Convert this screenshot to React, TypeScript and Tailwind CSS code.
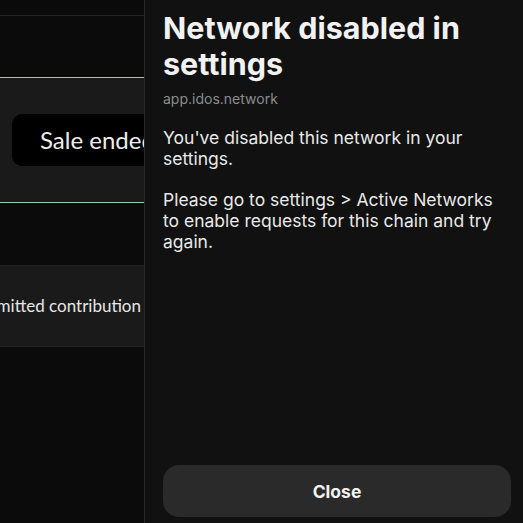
export default function App() {
  return (
    <div className="flex h-[523px] w-[523px] overflow-hidden bg-[#0b0b0b]">
      <SaleBackdrop />
      <NetworkSheet />
    </div>
  );
}

function SaleBackdrop() {
  return (
    <div
      className="flex w-[145px] shrink-0 flex-col overflow-hidden border-r border-[#2a2a2a] bg-[#0b0b0b]"
      style={{ fontFamily: "Lato, 'Open Sans', sans-serif" }}
    >
      <div className="h-[16px] border-b border-[#1d2530] bg-[#0a0a0b]" />
      <div className="h-[62px] border-b border-[#8ccfb2]" />
      <div className="flex h-[125px] items-center border-b border-[#8ccfb2] bg-[#1a1a1a] pl-[12px]">
        <div className="flex h-[52px] w-[200px] shrink-0 items-center rounded-[10px] bg-black pl-[28px] text-[24px] whitespace-nowrap text-[#ececec]">
          Sale ended
        </div>
      </div>
      <div className="h-[63px] border-b border-[#222]" />
      <div className="flex h-[81px] items-center justify-end border-b border-[#222] bg-[#1a1a1a] pr-[3px]">
        <span className="text-[17px] whitespace-nowrap text-[#e6e6e6]">Submitted contribution</span>
      </div>
      <div className="flex-1" />
    </div>
  );
}

function NetworkSheet() {
  return (
    <div
      className="flex flex-1 flex-col bg-[#111111] pt-[10px] pr-[12px] pb-[6px] pl-[18px]"
      style={{ fontFamily: "Inter, 'Liberation Sans', sans-serif" }}
    >
      <h1 className="text-[30.5px] leading-[36px] font-bold text-[#f2f2f2]">Network disabled in settings</h1>
      <p className="mt-[8px] text-[14px] leading-[18px] text-[#8c8c8c]">app.idos.network</p>
      <div className="mt-[19px] flex flex-col gap-[20px] text-[17.5px] leading-[21px] text-[#e8e8e8]">
        <p>You've disabled this network in your settings.</p>
        <p>Please go to settings &gt; Active Networks to enable requests for this chain and try again.</p>
      </div>
      <div className="flex-1" />
      <button className="h-[52px] w-full rounded-[16px] bg-[#2a2a2a] pt-[3px] text-[17.5px] font-bold text-[#f2f2f2]">
        Close
      </button>
    </div>
  );
}
